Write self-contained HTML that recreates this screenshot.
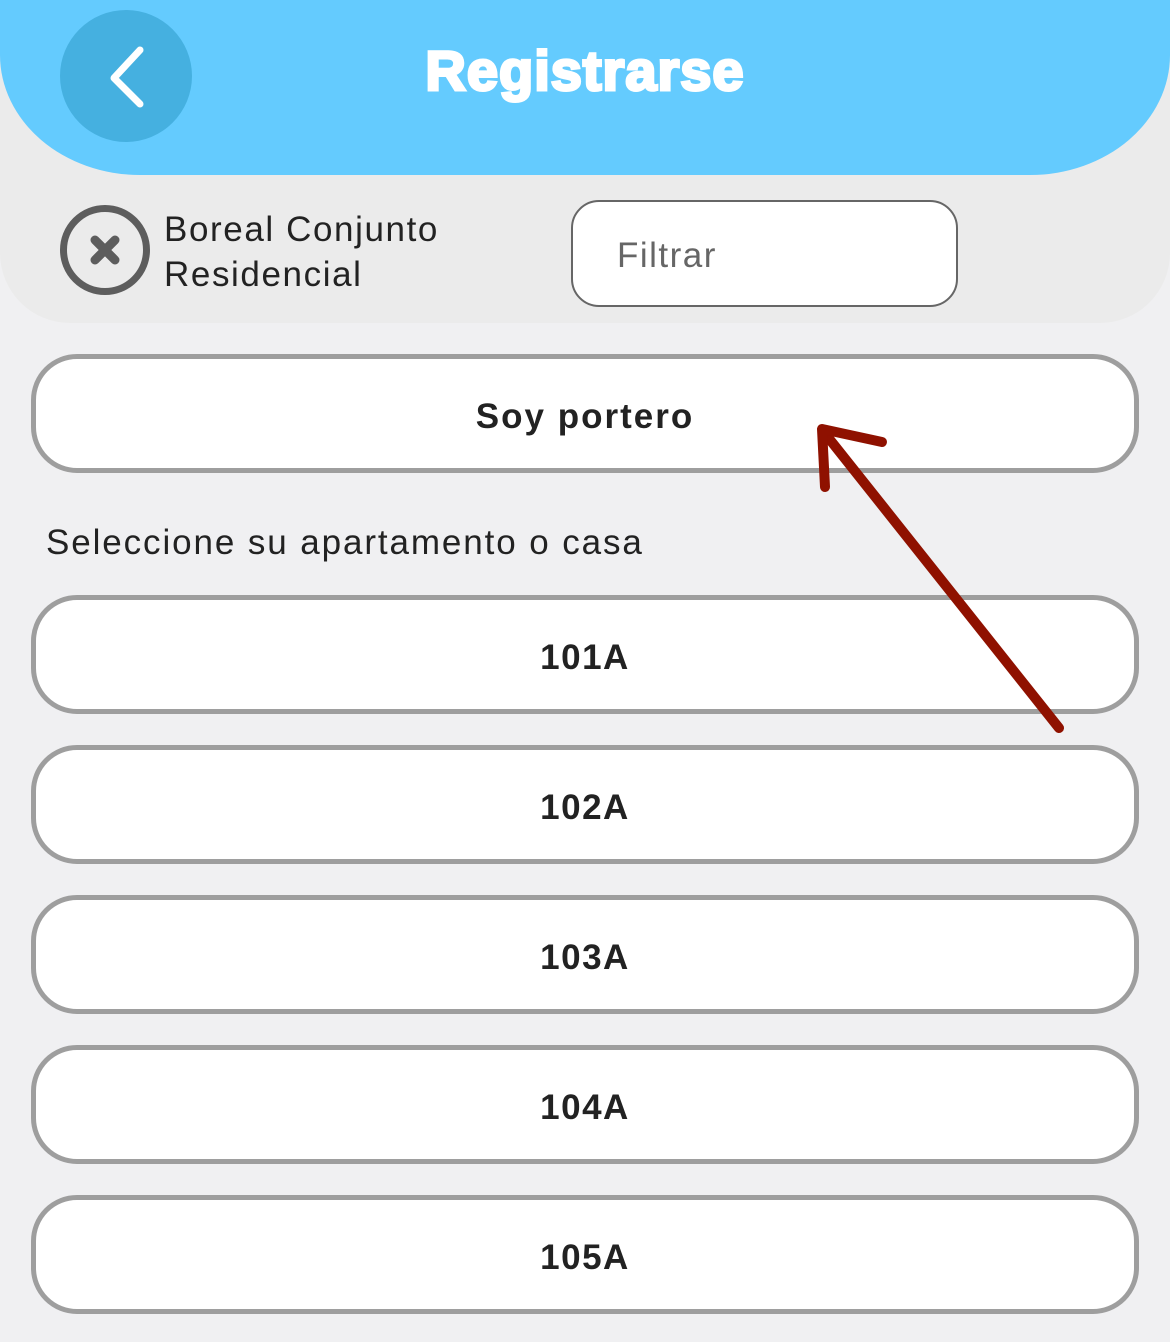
<!DOCTYPE html>
<html><head><meta charset="utf-8"><style>
html,body{margin:0;padding:0}
body{width:1170px;height:1342px;background:#f0f0f2;position:relative;overflow:hidden;font-family:"Liberation Sans",sans-serif}
.gray{position:absolute;left:0;top:0;width:1170px;height:323px;background:#ebebeb;border-radius:0 0 70px 70px}
.hdr{position:absolute;left:0;top:0;width:1170px;height:175px;background:#64cbfe;border-radius:0 0 140px 140px/0 0 120px 120px}
.back{position:absolute;left:60px;top:10px;width:132px;height:132px;border-radius:50%;background:#45b0e0}
.title{position:absolute;left:0;width:1170px;top:38px;text-align:center;color:#fff;font-weight:bold;font-size:56px;-webkit-text-stroke:3px #fff;letter-spacing:1px}
.xc{position:absolute;left:60px;top:205px;width:76px;height:76px;border:7px solid #5d5d5d;border-radius:50%}
.name{position:absolute;left:164px;top:207px;font-size:35px;line-height:45px;color:#222;letter-spacing:1.6px}
.filt{position:absolute;left:571px;top:200px;width:383px;height:103px;border:2.5px solid #666;border-radius:28px;background:#fff}
.filt span{position:absolute;left:44px;top:34px;font-size:35px;color:#666;letter-spacing:1.5px}
.btn{position:absolute;left:31px;width:1098px;height:109px;border:5px solid #9e9e9e;border-radius:46px;background:#fff;text-align:center;line-height:115px;font-weight:bold;font-size:35px;color:#222;letter-spacing:1.5px}
.lbl{position:absolute;left:46px;top:523px;font-size:35px;color:#222;letter-spacing:1.9px}
</style></head><body>
<div class="gray"></div>
<div class="hdr"></div>
<div class="back"></div>
<svg style="position:absolute;left:0;top:0" width="1170" height="200"><path d="M140 50 L114 78 L140 104" fill="none" stroke="#fff" stroke-width="7" stroke-linecap="round" stroke-linejoin="round"/></svg>
<div class="title">Registrarse</div>
<div class="xc"></div>
<svg style="position:absolute;left:0;top:0" width="300" height="320"><path d="M95 240 L115 260 M115 240 L95 260" stroke="#5d5d5d" stroke-width="9" stroke-linecap="round"/></svg>
<div class="name">Boreal Conjunto<br>Residencial</div>
<div class="filt"><span>Filtrar</span></div>
<div class="btn" style="top:354px;letter-spacing:2px">Soy portero</div>
<div class="lbl">Seleccione su apartamento o casa</div>
<div class="btn" style="top:595px">101A</div>
<div class="btn" style="top:745px">102A</div>
<div class="btn" style="top:895px">103A</div>
<div class="btn" style="top:1045px">104A</div>
<div class="btn" style="top:1195px">105A</div>
<svg style="position:absolute;left:0;top:0" width="1170" height="1342"><g fill="none" stroke="#8f1100" stroke-width="10" stroke-linecap="round" stroke-linejoin="round"><path d="M1059 728 L823 431"/><path d="M882 442 L822 429 L825 487"/></g></svg>
</body></html>
